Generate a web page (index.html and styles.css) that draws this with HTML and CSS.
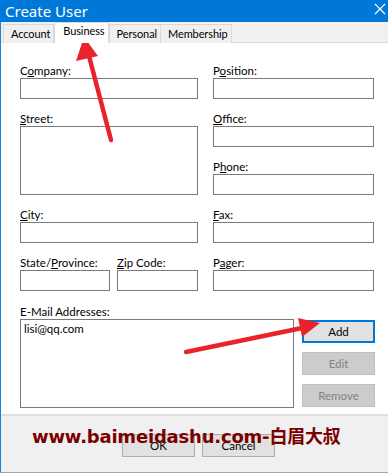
FILE: index.html
```html
<!DOCTYPE html>
<html>
<head>
<meta charset="utf-8">
<link rel="stylesheet" href="styles.css">
</head>
<body>
<div class="window">
  <div class="titlebar">
    <span class="title">Create User</span>
    <svg class="close" width="12" height="12" viewBox="0 0 12 12"><path d="M1 1L11 11M11 1L1 11" stroke="#fff" stroke-width="1.2"/></svg>
  </div>
  <div class="tabs">
    <div class="tab">Account</div>
    <div class="tab active">Business</div>
    <div class="tab">Personal</div>
    <div class="tab">Membership</div>
    <div class="tab-fill"></div>
  </div>
  <div class="panel">
    <div class="cols">
      <div class="col left">
        <div class="field"><div class="lbl">C<u>o</u>mpany:</div><div class="input"></div></div>
        <div class="field"><div class="lbl"><u>S</u>treet:</div><div class="input area"></div></div>
        <div class="field"><div class="lbl"><u>C</u>ity:</div><div class="input"></div></div>
        <div class="pair">
          <div class="field state"><div class="lbl">State/<u>P</u>rovince:</div><div class="input"></div></div>
          <div class="field zip"><div class="lbl"><u>Z</u>ip Code:</div><div class="input"></div></div>
        </div>
      </div>
      <div class="col right">
        <div class="field"><div class="lbl">P<u>o</u>sition:</div><div class="input"></div></div>
        <div class="field"><div class="lbl"><u>O</u>ffice:</div><div class="input"></div></div>
        <div class="field"><div class="lbl">P<u>h</u>one:</div><div class="input"></div></div>
        <div class="field"><div class="lbl"><u>F</u>ax:</div><div class="input"></div></div>
        <div class="field"><div class="lbl">P<u>a</u>ger:</div><div class="input"></div></div>
      </div>
    </div>
    <div class="email">
      <div class="lbl">E-Mail Addresses:</div>
      <div class="email-row">
        <div class="listbox"><div class="item">lisi@qq.com</div></div>
        <div class="btns">
          <div class="btn primary">Add</div>
          <div class="btn disabled">Edit</div>
          <div class="btn disabled">Remove</div>
        </div>
      </div>
    </div>
  </div>
  <div class="footer">
    <div class="btn fbtn">OK</div>
    <div class="btn fbtn">Cancel</div>
  </div>
  <div class="watermark">www.baimeidashu.com-白眉大叔</div>
  <svg class="arrows" width="388" height="473" viewBox="0 0 388 473">
    <line x1="111" y1="140" x2="89" y2="56" stroke="#e8232b" stroke-width="4.5" stroke-linecap="round"/>
    <polygon points="84,37 76,61 98,56" fill="#e8232b"/>
    <line x1="186" y1="352" x2="302" y2="328" stroke="#e8232b" stroke-width="4.5" stroke-linecap="round"/>
    <polygon points="320,323 298,318 302,337" fill="#e8232b"/>
  </svg>
</div>
</body>
</html>
```

FILE: styles.css
```css
* { box-sizing: border-box; }
html, body { margin: 0; padding: 0; }
body {
  width: 388px;
  height: 473px;
  overflow: hidden;
  background: #ffffff;
  font-family: Lato, "Noto Sans", sans-serif;
  font-size: 11.5px;
  color: #000;
}
.window {
  position: relative;
  width: 388px;
  height: 473px;
  border-left: 1px solid #1883d7;
  border-bottom: 1px solid #a8a8a8;
  display: flex;
  flex-direction: column;
}
.titlebar {
  height: 22px;
  margin-left: -1px;
  background: #0078d7;
  display: flex;
  align-items: center;
  justify-content: space-between;
  padding: 0 2px 1px 5px;
}
.title {
  color: #fff;
  font-family: "Noto Sans", sans-serif;
  font-size: 15px;
  line-height: 18px;
}
.close { margin-top: -4px; }
.tabs {
  height: 21px;
  background: #f0f0f0;
  display: flex;
  align-items: flex-end;
  padding-left: 2px;
}
.tab {
  height: 19px;
  border: 1px solid #d9d9d9;
  border-bottom: none;
  background: #f0f0f0;
  padding: 0 3px 0 7px;
  font-size: 11px;
  letter-spacing: -0.1px;
  line-height: 18px;
  margin-right: -1px;
  position: relative;
}
.tab.active {
  height: 21px;
  background: #fff;
  z-index: 1;
  margin-left: 1px;
  margin-right: 0;
  line-height: 16px;
  padding: 0 3px 0 8px;
}
.tab-fill {
  flex: 1;
  border-bottom: 1px solid #d9d9d9;
}
.panel {
  height: 373px;
  background: #fff;
  padding: 20px 13px 0 19px;
  border-bottom: 2px solid #dfdfdf;
}
.cols {
  display: flex;
  gap: 15px;
}
.col.left { width: 178px; }
.col.right { width: 161px; }
.field { margin-bottom: 12px; }
.lbl {
  height: 15px;
  line-height: 15px;
  white-space: nowrap;
}
.input {
  height: 21px;
  border: 1px solid #7a7a7a;
  background: #fff;
}
.input.area { height: 69px; }
.pair { display: flex; gap: 7px; }
.state { width: 90px; }
.zip { width: 81px; }
.email .lbl { margin-top: 1px; }
.email-row {
  display: flex;
  gap: 8px;
}
.listbox {
  width: 274px;
  height: 89px;
  border: 1px solid #7a7a7a;
  padding: 1px 3px;
}
.item { line-height: 15px; }
.btns {
  display: flex;
  flex-direction: column;
  gap: 9px;
  padding-top: 1px;
}
.btn {
  width: 73px;
  height: 23px;
  border: 1px solid #adadad;
  background: #e1e1e1;
  display: flex;
  align-items: center;
  justify-content: center;
}
.btn.primary {
  border: 2px solid #0078d7;
}
.btn.disabled {
  background: #cccccc;
  border-color: #bfbfbf;
  color: #838383;
}
.footer {
  flex: 1;
  background: #f0f0f0;
  display: flex;
  gap: 7px;
  padding: 18px 0 0 121px;
}
.fbtn { height: 23px; }
.watermark {
  position: absolute;
  left: 31px;
  top: 425px;
  font-family: "DejaVu Sans", "Noto Sans CJK SC", sans-serif;
  font-weight: bold;
  font-size: 18px;
  line-height: 24px;
  color: #7a0000;
  white-space: nowrap;
  letter-spacing: -0.2px;
}
.arrows {
  position: absolute;
  left: -1px;
  top: 0;
  pointer-events: none;
}
```
